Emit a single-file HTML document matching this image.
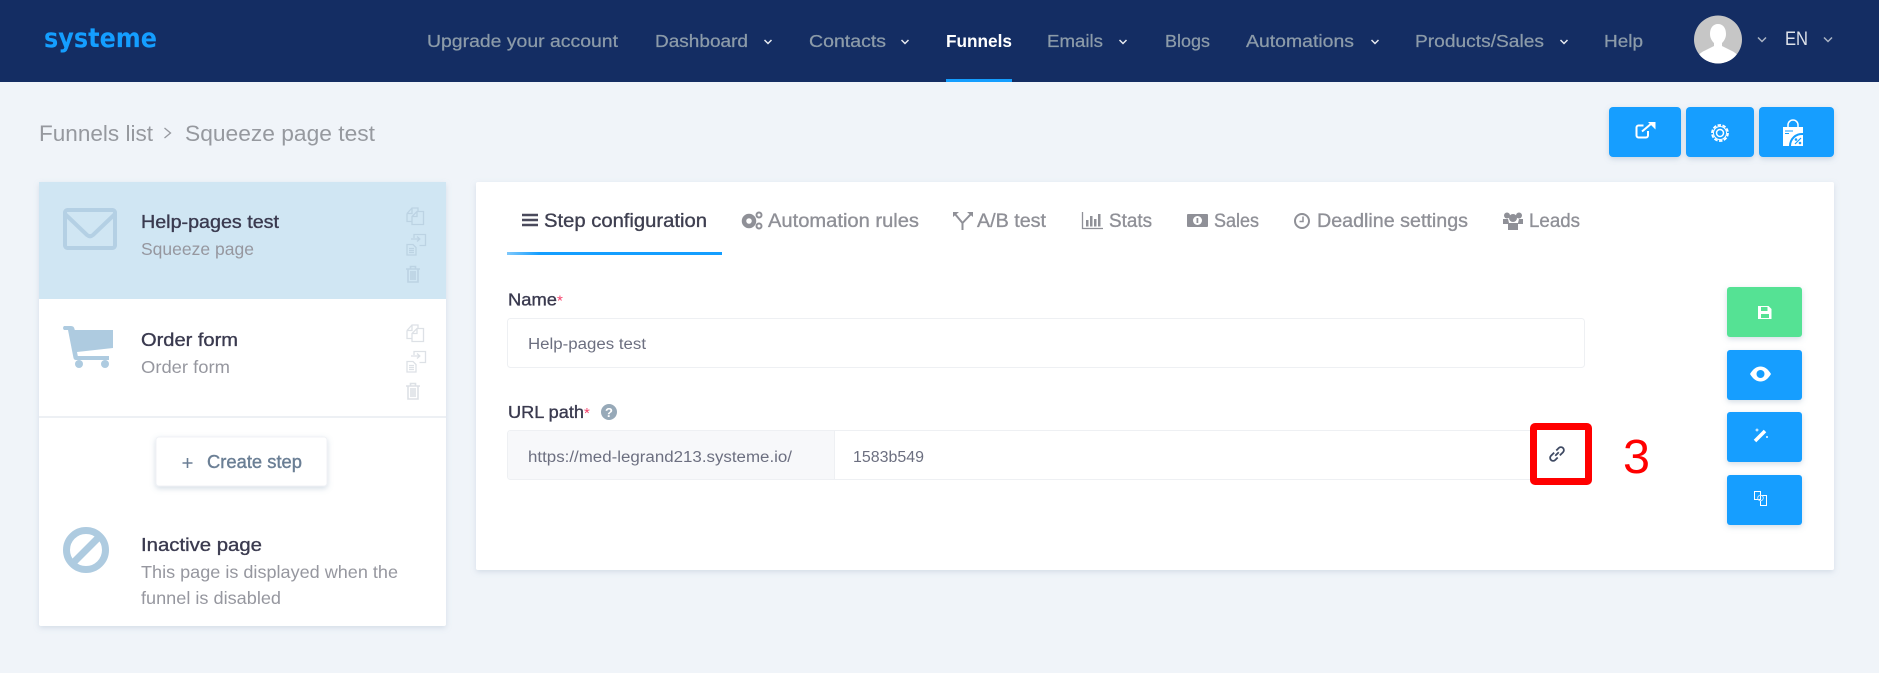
<!DOCTYPE html>
<html><head><meta charset="utf-8"><style>
html,body{margin:0;padding:0;width:1879px;height:673px;overflow:hidden;background:#f0f4f9}
svg{display:block;font-family:"Liberation Sans",sans-serif}
.nav{font-size:17.5px;fill:#8c9ba9;stroke:#8c9ba9;stroke-width:.25}
.t{font-size:18.5px;fill:#3a3a4f;stroke:#3a3a4f;stroke-width:.35}
.s{font-size:17.5px;fill:#96979f}
.tab{font-size:19.5px;fill:#8f9097;stroke:#8f9097;stroke-width:.35}
.f{font-size:15.5px;fill:#6c6f80}
.b{font-size:17.5px;fill:#3a3a4f;stroke:#3a3a4f;stroke-width:.35}
</style></head><body>
<svg width="1879" height="673" viewBox="0 0 1879 673" xmlns="http://www.w3.org/2000/svg">
<defs>
<filter id="sh" x="-5%" y="-5%" width="110%" height="115%"><feDropShadow dx="0" dy="2" stdDeviation="3" flood-color="#8aa0b8" flood-opacity=".28"/></filter>
<filter id="bs" x="-20%" y="-20%" width="140%" height="150%"><feDropShadow dx="0" dy="2" stdDeviation="3" flood-color="#6f8aa8" flood-opacity=".3"/></filter>
<linearGradient id="ug" x1="0" x2="1"><stop offset="0" stop-color="#7fc8fb"/><stop offset=".15" stop-color="#149eff"/></linearGradient>
<clipPath id="av"><circle cx="1718" cy="39.500" r="24"/></clipPath>
<g id="ico" fill="none" stroke-width="1.300">
<path d="M1 6.500L6 1h6v3.500M1 6.500h5V1M1 6.500V14.500h5"/><path d="M11 4.500h6.500V17.500H6V9.500zM6 9.500h5V4.500"/>
<path d="M1 37.500h6l3 3v7.500H1zM3 41.500h5M3 43.500h5M3 45.500h5"/><path d="M8 31v-3.500h11.500v11h-6M5 32h8.500M11 29.500l2.800 2.500-2.800 2.500"/>
<path d="M2 62.500v12.500h10V62.500M0 62h14M4.500 62v-2.500h5V62M5 64v9M7 64v9M9 64v9" stroke-width="1.600"/>
</g>
</defs>

<rect width="1879" height="82" fill="#142d63"/>
<text x="44" y="47" font-family="DejaVu Sans" font-size="27" font-weight="700" fill="#149eff" textLength="113" lengthAdjust="spacingAndGlyphs" style="font-family:'DejaVu Sans',sans-serif">systeme</text>
<g class="nav">
<text x="427" y="47" textLength="191" lengthAdjust="spacingAndGlyphs">Upgrade your account</text>
<text x="655" y="47" textLength="93" lengthAdjust="spacingAndGlyphs">Dashboard</text>
<text x="809" y="47" textLength="77" lengthAdjust="spacingAndGlyphs">Contacts</text>
<text x="946" y="47" textLength="66" lengthAdjust="spacingAndGlyphs" style="fill:#fff;stroke:none" font-weight="700">Funnels</text>
<text x="1047" y="47" textLength="56" lengthAdjust="spacingAndGlyphs">Emails</text>
<text x="1165" y="47" textLength="45" lengthAdjust="spacingAndGlyphs">Blogs</text>
<text x="1246" y="47" textLength="108" lengthAdjust="spacingAndGlyphs">Automations</text>
<text x="1415" y="47" textLength="129" lengthAdjust="spacingAndGlyphs">Products/Sales</text>
<text x="1604" y="47" textLength="39" lengthAdjust="spacingAndGlyphs">Help</text>
<text x="1785" y="45" font-size="19" textLength="23" lengthAdjust="spacingAndGlyphs" style="fill:#dfe3ea;stroke:none">EN</text>
</g>
<g fill="none" stroke="#e6eaf0" stroke-width="1.500">
<path d="M764.500 40l3.500 3.500 3.500-3.500M901.500 40l3.500 3.500 3.500-3.500M1119.500 40l3.500 3.500 3.500-3.500M1371.500 40l3.500 3.500 3.500-3.500M1560.500 40l3.500 3.500 3.500-3.500"/>
<path d="M1758 37.500l4 4 4-4M1824 37.500l4 4 4-4" stroke="#aab4c4"/>
</g>
<rect x="946" y="79" width="66" height="3" fill="#149eff"/>
<circle cx="1718" cy="39.500" r="24" fill="#c6c6c6"/>
<path clip-path="url(#av)" d="M1718 24c5 0 8 4 8 10 0 4-2 7-4 9v3l10 5c2 1 5 3 6 5v10h-40v-10c1-2 4-4 6-5l10-5v-3c-2-2-4-5-4-9 0-6 3-10 8-10z" fill="#fff"/>

<g font-size="22" fill="#96999f">
<text x="39" y="141" textLength="114" lengthAdjust="spacingAndGlyphs">Funnels list</text>
<text x="185" y="141" textLength="190" lengthAdjust="spacingAndGlyphs">Squeeze page test</text>
</g>
<path d="M164.500 128l6 5-6 5" fill="none" stroke="#96999f" stroke-width="1.300"/>

<g fill="#149eff" filter="url(#bs)">
<rect x="1609" y="107" width="72" height="50" rx="4"/>
<rect x="1686" y="107" width="68" height="50" rx="4"/>
<rect x="1759" y="107" width="75" height="50" rx="4"/>
</g>
<path d="M1648 131v4.500a2 2 0 0 1-2 2h-7.500a2 2 0 0 1-2-2v-8a2 2 0 0 1 2-2h5M1642 131.500l9.500-8" fill="none" stroke="#fff" stroke-width="2"/>
<path d="M1648 122h7.500v7.500z" fill="#fff"/>
<circle cx="1720" cy="133" r="8" fill="none" stroke="#fff" stroke-width="1.800" stroke-dasharray="3.500 1.500"/>
<circle cx="1720" cy="133" r="6.500" fill="none" stroke="#fff" stroke-width="1"/>
<circle cx="1720" cy="133" r="3.500" fill="none" stroke="#fff" stroke-width="1.500"/>
<path d="M1783 127h20v19h-20z" fill="#fff"/>
<path d="M1788 127v-2a5 5 0 0 1 10 0v2" fill="none" stroke="#fff" stroke-width="1.500"/>
<path d="M1791 146a11 11 0 0 1 12-11v-2a13 13 0 0 0-14 13z" fill="#149eff"/>
<path d="M1785 131h8M1785 133.500h4" stroke="#149eff" stroke-width="1"/>
<path d="M1795 144l6-6" stroke="#149eff" stroke-width="1.200"/>
<circle cx="1796" cy="139.500" r="1.300" fill="#149eff"/><circle cx="1800" cy="143" r="1.300" fill="#149eff"/>

<!-- left panel -->
<rect x="39" y="182" width="407" height="444" rx="2" fill="#fff" filter="url(#sh)"/>
<rect x="39" y="182" width="407" height="117" fill="#d0e6f3"/>
<rect x="39" y="416" width="407" height="2" fill="#edf0f4"/>

<rect x="65" y="210" width="50" height="38" rx="2.500" fill="none" stroke="#b4d0e4" stroke-width="4"/>
<path d="M65 214l22 21q3 2.500 6 0l22-21" fill="none" stroke="#b4d0e4" stroke-width="4"/>
<g fill="#aecbe0">
<path d="M64 326h7q3 0 3.500 3l.3 1H113V348L77 352l.8 4H109v4H76q-2 0-2.500-2L68 330H64q-2-2 0-4z"/>
<circle cx="79" cy="364" r="4"/><circle cx="105" cy="364" r="4"/>
</g>
<circle cx="86" cy="550" r="19.500" fill="none" stroke="#aecbe0" stroke-width="7"/>
<path d="M73 563l26-26" stroke="#aecbe0" stroke-width="7"/>

<use href="#ico" x="406" y="207" stroke="#bcd3e3"/>
<use href="#ico" x="406" y="324" stroke="#dde1e6"/>

<text x="141" y="228" class="t" textLength="138" lengthAdjust="spacingAndGlyphs">Help-pages test</text>
<text x="141" y="255" class="s" textLength="113" lengthAdjust="spacingAndGlyphs">Squeeze page</text>
<text x="141" y="346" class="t" textLength="97" lengthAdjust="spacingAndGlyphs">Order form</text>
<text x="141" y="373" class="s" textLength="89" lengthAdjust="spacingAndGlyphs">Order form</text>

<rect x="156" y="437" width="171" height="49" rx="3" fill="#fff" stroke="#f0f2f6" filter="url(#bs)"/>
<path d="M182.500 463h10M187.500 458v10" stroke="#6b7f95" stroke-width="1.600"/>
<text x="207" y="468" font-size="18.500" fill="#6b7f95" stroke="#6b7f95" stroke-width=".4" textLength="95" lengthAdjust="spacingAndGlyphs">Create step</text>

<text x="141" y="551" class="t" textLength="121" lengthAdjust="spacingAndGlyphs">Inactive page</text>
<text x="141" y="578" class="s" textLength="257" lengthAdjust="spacingAndGlyphs">This page is displayed when the</text>
<text x="141" y="604" class="s" textLength="140" lengthAdjust="spacingAndGlyphs">funnel is disabled</text>

<!-- right panel -->
<rect x="476" y="182" width="1358" height="388" rx="2" fill="#fff" filter="url(#sh)"/>
<rect x="507" y="252" width="215" height="3" fill="url(#ug)"/>

<path d="M522 215h16M522 220h16M522 225h16" stroke="#4a4a5c" stroke-width="2.500"/>
<text x="544" y="227" class="tab" style="fill:#3e3f50;stroke:#3e3f50" textLength="163" lengthAdjust="spacingAndGlyphs">Step configuration</text>
<g fill="none" stroke="#8f9097">
<circle cx="749" cy="221" r="5" stroke-width="4.500"/>
<circle cx="759" cy="215" r="2.500" stroke-width="2"/>
<circle cx="759" cy="226" r="2.500" stroke-width="2"/>
</g>
<text x="768" y="227" class="tab" textLength="151" lengthAdjust="spacingAndGlyphs">Automation rules</text>
<path d="M955 214l7.500 9V230M971 214l-8.500 9" fill="none" stroke="#8f9097" stroke-width="2"/>
<path d="M953 212h6l-6 5zM973 212h-6l6 5z" fill="#8f9097"/>
<text x="977" y="227" class="tab" textLength="69" lengthAdjust="spacingAndGlyphs">A/B test</text>
<path d="M1082.500 212v16.500H1103" fill="none" stroke="#8f9097" stroke-width="1.300"/>
<path d="M1086 220h2.500v6.500H1086zM1090 216h2.500v10.500H1090zM1094 219h2.500v7.500H1094zM1098 214h2.500v12.500H1098z" fill="#8f9097"/>
<text x="1109" y="227" class="tab" textLength="43" lengthAdjust="spacingAndGlyphs">Stats</text>
<rect x="1187" y="214" width="21" height="13" rx="1" fill="#8f9097"/><circle cx="1197.500" cy="220.500" r="4.500" fill="#fff"/>
<rect x="1196.500" y="218" width="1.800" height="5" fill="#8f9097"/>
<text x="1214" y="227" class="tab" textLength="45" lengthAdjust="spacingAndGlyphs">Sales</text>
<circle cx="1302" cy="221" r="7" fill="none" stroke="#8f9097" stroke-width="2"/>
<path d="M1303 216.500v5h-3.500" fill="none" stroke="#8f9097" stroke-width="1.500"/>
<text x="1317" y="227" class="tab" textLength="151" lengthAdjust="spacingAndGlyphs">Deadline settings</text>
<g fill="#8f9097"><circle cx="1507" cy="215.500" r="3"/><circle cx="1519" cy="215.500" r="3"/><circle cx="1513" cy="218" r="4"/>
<path d="M1503 219h5l1 4h9l1-4h4v5h-5v6h-10v-6h-5z"/></g>
<text x="1529" y="227" class="tab" textLength="51" lengthAdjust="spacingAndGlyphs">Leads</text>

<text x="508" y="305.500" class="b" textLength="49" lengthAdjust="spacingAndGlyphs">Name</text>
<text x="557" y="305.500" font-size="15" fill="#f5426c">*</text>
<rect x="507.500" y="318.500" width="1077" height="49" rx="3" fill="#fff" stroke="#eef0f3"/>
<text x="528" y="349" class="f" textLength="118" lengthAdjust="spacingAndGlyphs">Help-pages test</text>

<text x="508" y="418" class="b" textLength="76" lengthAdjust="spacingAndGlyphs">URL path</text>
<text x="584" y="418" font-size="15" fill="#f5426c">*</text>
<circle cx="609" cy="412" r="8" fill="#97a9b8"/>
<text x="609" y="417" font-size="13" font-weight="700" fill="#fff" text-anchor="middle">?</text>

<rect x="507.500" y="430.500" width="1077" height="49" rx="3" fill="#fff" stroke="#eef0f3"/>
<path d="M834 431H510.500q-2.500 0-2.500 2.500v43q0 2.500 2.500 2.500H834z" fill="#f7f8fa"/>
<path d="M834.500 431v48" stroke="#eef0f3"/>
<text x="528" y="462" class="f" textLength="264" lengthAdjust="spacingAndGlyphs">https://med-legrand213.systeme.io/</text>
<text x="853" y="462" class="f" textLength="71" lengthAdjust="spacingAndGlyphs">1583b549</text>

<rect x="1533.500" y="426.500" width="55" height="55" rx="1.500" fill="#fff" stroke="#ff0000" stroke-width="7"/>
<g transform="translate(1557 454) rotate(-45)" fill="none" stroke="#3f4a63" stroke-width="1.800">
<path d="M-1 -3H-5.500a3 3 0 0 0 0 6H-2M1 3H5.500a3 3 0 0 0 0-6H2M-2.500 0H2.500"/>
</g>
<text x="1623" y="473" font-size="48" fill="#ff0000" textLength="27" lengthAdjust="spacingAndGlyphs">3</text>

<rect x="1727" y="287" width="75" height="50" rx="3" fill="#55e294" filter="url(#bs)"/>
<g fill="#149eff" filter="url(#bs)">
<rect x="1727" y="350" width="75" height="50" rx="3"/>
<rect x="1727" y="412" width="75" height="50" rx="3"/>
<rect x="1727" y="475" width="75" height="50" rx="3"/>
</g>
<path d="M1758 306h10.500l3 3v10h-13.500z" fill="#fff"/>
<rect x="1761" y="307" width="6.500" height="4" fill="#55e294"/><rect x="1761" y="314" width="8" height="4" fill="#55e294"/>
<path d="M1750 374c3-5 6.500-7.500 10.500-7.500s7.500 2.500 10.500 7.500c-3 5-6.500 7.500-10.500 7.500s-7.500-2.500-10.500-7.500z" fill="#fff"/>
<circle cx="1760.500" cy="374" r="4" fill="#149eff"/>
<path d="M1755 441l10-10" stroke="#fff" stroke-width="3.500"/>
<path d="M1755.500 430h3M1757 428.500v3M1766 437h2M1767 436v2" stroke="#fff" stroke-width=".9"/>
<path d="M1754.500 491.500h6v8h-6zM1761 495.500h5.500v10h-6v-5" fill="none" stroke="#fff" stroke-width="1"/>
<circle cx="1760.500" cy="498" r="2.800" fill="none" stroke="#cfe9ff" stroke-width=".9"/>
</svg>
</body></html>
